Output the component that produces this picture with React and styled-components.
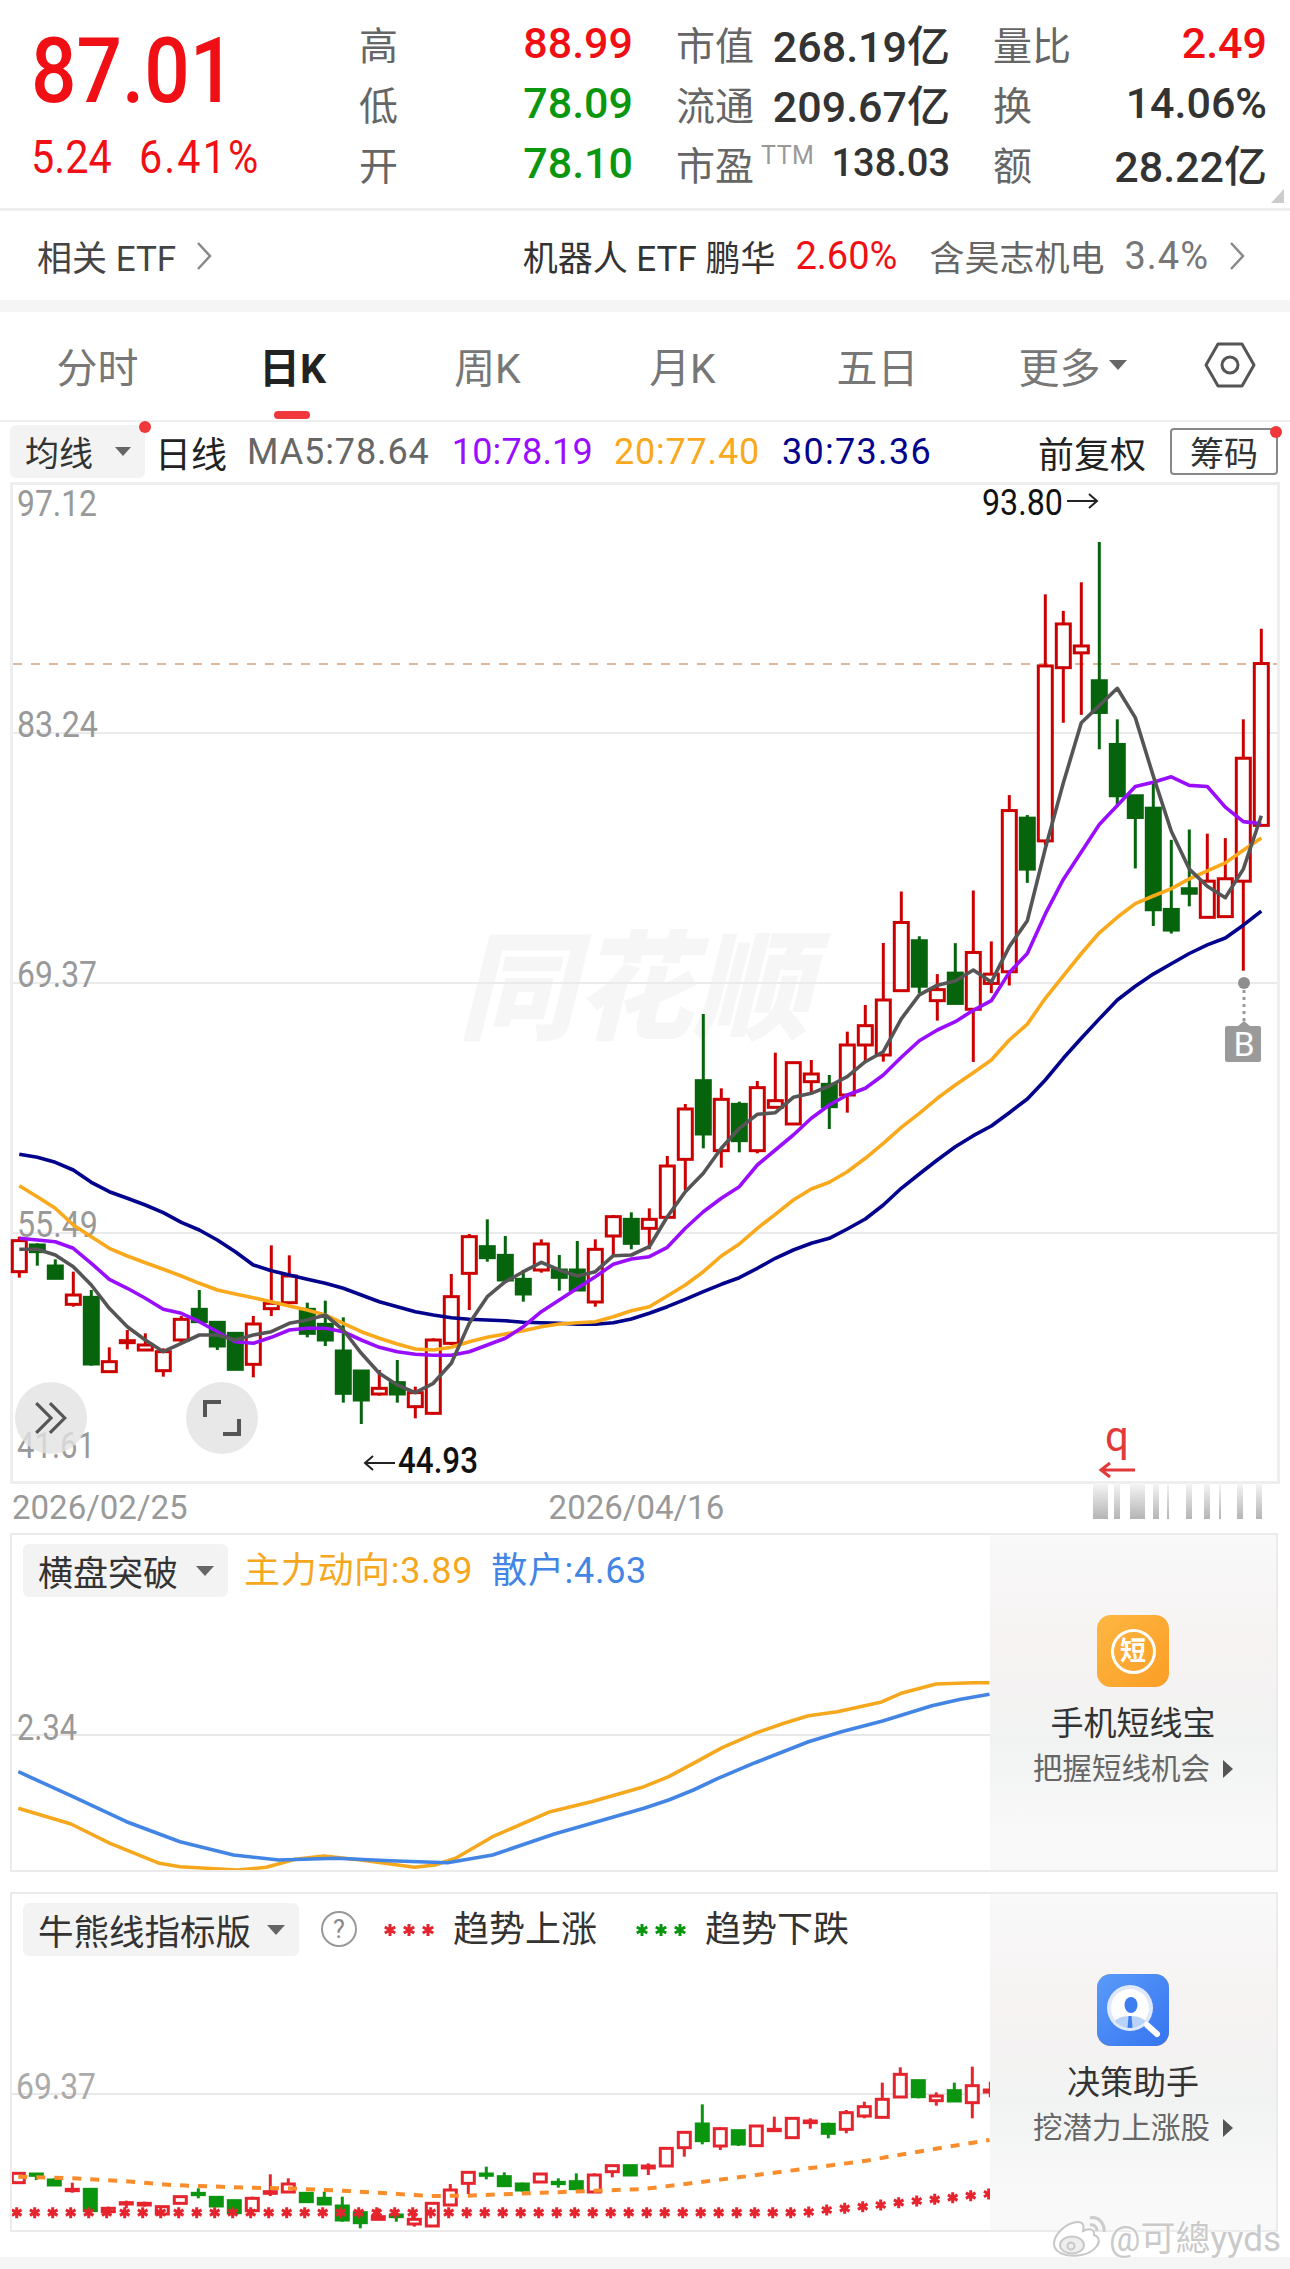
import styled, { createGlobalStyle } from 'styled-components'

const FONT = 'Roboto, "Noto Sans CJK SC", sans-serif'
const RED = '#f00f14'
const GREEN = '#0a960f'

const GlobalStyle = createGlobalStyle`
	html, body {
		margin: 0;
		padding: 0;
		background: #fff;
		font-family: ${FONT};
	}
	* {
		box-sizing: border-box;
	}
`

/* ---------- chart data, read off the picture ---------- */

const xAt = (i) => 19.3 + 18 * i
const lowerY = (v) => 1020 + v / 3
const upperY = (v) => 480 + v / 2.904
const miniY = (v) => 1890 + v / 3

// [high, bodyTop, bodyBottom, low, colour]
const candlesLower = [
	[650, 662, 755, 773, 'r'], [670, 675, 695, 737, 'g'], [718, 738, 775, 775, 'g'], [755, 825, 853, 860, 'r'],
	[810, 832, 1032, 1037, 'g'], [982, 1025, 1055, 1055, 'r'], [930, 962, 968, 988, 'r'], [940, 975, 990, 990, 'r'],
	[985, 995, 1052, 1070, 'r'], [888, 898, 960, 970, 'r'], [810, 868, 905, 905, 'g'], [905, 907, 978, 990, 'g'],
	[940, 940, 1048, 1048, 'g'], [888, 912, 1033, 1072, 'r'], [676, 850, 866, 888, 'r'], [706, 768, 848, 850, 'r'],
	[848, 868, 940, 952, 'g'], [842, 913, 960, 978, 'g'], [892, 993, 1120, 1148, 'g'], [1053, 1053, 1140, 1212, 'g'],
	[1050, 1105, 1122, 1127, 'r'], [1020, 1088, 1122, 1148, 'g'], [1100, 1118, 1160, 1195, 'r'], [955, 960, 1180, 1183, 'r'],
	[762, 830, 970, 975, 'r'], [642, 650, 760, 870, 'r'], [598, 680, 713, 725, 'g'], [648, 706, 780, 780, 'g'],
	[750, 778, 822, 845, 'g'], [658, 672, 750, 758, 'r'], [705, 750, 772, 812, 'g'], [663, 750, 810, 810, 'g'],
	[658, 688, 846, 860, 'r'], [585, 590, 648, 705, 'r'], [577, 598, 670, 688, 'g'], [565, 598, 625, 688, 'r'],
	[408, 438, 592, 592, 'r'], [252, 267, 418, 510, 'r'], [-18, 182, 342, 385, 'g'], [205, 238, 392, 443, 'r'],
	[245, 253, 362, 397, 'g'], [183, 203, 392, 400, 'r'], [98, 242, 262, 262, 'r'], [128, 128, 312, 312, 'r'],
	[120, 162, 185, 220, 'r'], [165, 193, 260, 327, 'g'], [35, 75, 225, 278, 'r'], [-45, 17, 75, 125, 'r'],
	[-231, -60, 105, 125, 'r'],
]

const candlesUpper = [
	[1195, 1285, 1483, 1483, 'r'], [1325, 1338, 1470, 1490, 'g'], [1435, 1480, 1512, 1570, 'r'], [1345, 1432, 1520, 1520, 'g'],
	[1192, 1372, 1537, 1690, 'r'], [1340, 1435, 1462, 1490, 'r'], [915, 960, 1428, 1468, 'r'], [973, 982, 1130, 1170, 'g'],
	[332, 540, 1048, 1060, 'r'], [380, 418, 545, 705, 'r'], [297, 482, 502, 682, 'r'], [180, 583, 675, 782, 'g'],
	[695, 768, 917, 950, 'g'], [915, 917, 980, 1128, 'g'], [880, 953, 1248, 1295, 'g'], [1045, 1247, 1307, 1317, 'g'],
	[1015, 1187, 1200, 1238, 'g'], [1027, 1165, 1270, 1270, 'r'], [1040, 1158, 1268, 1268, 'r'], [695, 808, 1165, 1425, 'r'],
	[432, 533, 1003, 1003, 'r'],
]

const candlesMini = [
	[848, 850, 878, 880, 'r'], [850, 852, 856, 870, 'g'], [865, 870, 885, 885, 'g'], [878, 898, 902, 908, 'r'],
	[895, 898, 962, 962, 'g'], [950, 955, 965, 965, 'r'], [932, 938, 942, 955, 'r'], [935, 940, 945, 950, 'r'],
	[948, 950, 972, 975, 'r'], [918, 920, 940, 942, 'r'], [895, 910, 914, 925, 'g'], [922, 922, 948, 948, 'g'],
	[932, 932, 968, 968, 'g'], [920, 925, 962, 965, 'r'], [853, 905, 910, 918, 'r'], [865, 882, 906, 908, 'r'],
	[908, 910, 935, 937, 'g'], [905, 925, 942, 945, 'g'], [920, 948, 990, 995, 'g'], [968, 968, 998, 1015, 'g'],
	[955, 980, 988, 990, 'r'], [965, 975, 980, 995, 'g'], [975, 988, 1002, 1010, 'r'], [938, 940, 1008, 1008, 'r'],
	[882, 900, 945, 945, 'r'], [845, 847, 880, 912, 'r'], [830, 852, 856, 868, 'g'], [847, 860, 887, 887, 'g'],
	[878, 882, 900, 905, 'g'], [850, 852, 876, 878, 'r'], [865, 877, 881, 893, 'g'], [850, 875, 896, 896, 'g'],
	[850, 855, 906, 908, 'r'], [825, 827, 845, 862, 'r'], [825, 827, 855, 855, 'g'], [820, 828, 834, 855, 'r'],
	[773, 775, 828, 828, 'r'], [727, 727, 773, 800, 'r'], [643, 702, 752, 763, 'g'], [712, 716, 768, 780, 'r'],
	[722, 722, 762, 768, 'g'], [705, 708, 767, 768, 'r'], [680, 718, 722, 724, 'r'], [685, 685, 743, 743, 'r'],
	[685, 693, 698, 716, 'r'], [698, 703, 730, 745, 'g'], [660, 668, 718, 730, 'r'], [635, 650, 678, 685, 'r'],
	[578, 628, 682, 682, 'r'], [532, 553, 621, 621, 'r'], [572, 572, 620, 625, 'g'], [607, 618, 632, 647, 'r'],
	[578, 602, 633, 633, 'g'], [530, 587, 638, 685, 'r'], [575, 600, 606, 622, 'r'],
]

const series = (lower, upper) =>
	[...lower.map(lowerY), ...upper.map(upperY)].map((y, i) => `${xAt(i)},${y.toFixed(1)}`).join(' ')

const ma5 = series(
	[688, 688, 705, 740, 795, 865, 920, 960, 995, 970, 945, 945, 960, 945, 935, 910, 900, 885, 930, 1000, 1060, 1095, 1118, 1090, 1030, 910, 830, 785, 755, 727, 750, 768, 755, 707, 705, 680, 590, 515, 460, 385, 325, 283, 278, 232, 220, 198, 170, 125, 95],
	[1565, 1495, 1467, 1455, 1423, 1458, 1355, 1280, 1070, 880, 705, 655, 605, 690, 860, 1020, 1130, 1180, 1213, 1130, 975],
)
const ma10 = series(
	[655, 660, 665, 685, 730, 778, 805, 835, 868, 880, 905, 935, 965, 970, 952, 930, 925, 925, 935, 960, 982, 995, 1003, 1006, 1006, 995, 975, 955, 920, 875, 840, 805, 770, 733, 717, 710, 682, 625, 575, 535, 500, 435, 390, 345, 295, 255, 225, 205, 165, 112, 62, 30, 5],
	[1540, 1512, 1430, 1375, 1260, 1160, 1080, 1000, 945, 890, 878, 862, 887, 890, 950, 992, 998],
)
const ma20 = series(
	[497, 530, 565, 615, 650, 685, 708, 728, 748, 768, 790, 810, 822, 833, 845, 858, 870, 885, 910, 935, 955, 972, 987, 990, 982, 965, 952, 942, 932, 920, 912, 908, 905, 890, 872, 860, 828, 795, 755, 708, 672, 625, 583, 540, 507, 487, 455, 415, 370, 322, 280, 235, 195, 158, 120, 60],
	[1580, 1505, 1440, 1375, 1315, 1270, 1230, 1208, 1187, 1158, 1135, 1112, 1075, 1040],
)
const ma30 = series(
	[403, 412, 427, 450, 487, 515, 535, 555, 578, 607, 630, 660, 695, 735, 752, 765, 778, 790, 805, 825, 845, 860, 875, 885, 893, 898, 900, 902, 907, 908, 910, 913, 913, 908, 897, 880, 860, 838, 815, 793, 773, 745, 715, 690, 670, 655, 627, 597, 555, 505, 462, 420, 380, 347, 318, 278, 237, 180, 115, 55],
	[1565, 1510, 1470, 1435, 1405, 1375, 1350, 1330, 1293, 1252],
)

const zoomPoints = (pts, originX, toY) =>
	pts.map(([x, y]) => `${(originX + x / 2.431).toFixed(1)},${toY(y).toFixed(1)}`).join(' ')

const hpY = (v) => 1520 + v / 3

const trendBlue = [
	zoomPoints([[47, 755], [180, 830], [310, 905], [440, 965], [570, 1005], [680, 1020], [820, 1015], [950, 1022], [1090, 1028], [1200, 1005], [1350, 942]], 0, hpY),
	zoomPoints([[0, 865], [60, 840], [120, 810], [180, 775], [270, 728], [400, 665], [480, 635], [580, 603], [700, 557], [770, 538], [840, 523]], 645, hpY),
].join(' ')

const trendOrange = [
	zoomPoints([[47, 865], [175, 912], [270, 970], [390, 1030], [440, 1040], [580, 1050], [650, 1042], [720, 1018], [790, 1008], [880, 1020], [1010, 1042], [1060, 1035], [1110, 1015], [1200, 950], [1340, 875], [1440, 845]], 0, hpY),
	zoomPoints([[0, 800], [60, 770], [120, 730], [190, 683], [270, 640], [340, 610], [400, 587], [470, 575], [575, 547], [625, 520], [710, 492], [800, 488], [840, 488]], 645, hpY),
].join(' ')

const bullLine = [
	zoomPoints([[47, 860], [180, 865], [300, 873], [420, 885], [600, 893], [700, 895], [850, 903], [1050, 918], [1140, 917], [1320, 908]], 0, miniY),
	zoomPoints([[0, 897], [100, 882], [230, 862], [400, 835], [540, 812], [620, 795], [750, 768], [840, 750]], 645, miniY),
].join(' ')

const starRamp = [966, 960, 955, 950, 945, 938, 933, 928, 923, 917, 912]
const starsY = Array.from({ length: 55 }, (_, i) => (i < 44 ? 968 : starRamp[i - 44]))

const fadeBars = [
	[1093, 15], [1114, 6], [1130, 15], [1153, 6], [1167, 2], [1186, 6], [1204, 6], [1219, 2], [1237, 6], [1256, 6],
]

/* ---------- drawings ---------- */

const Candles = ({ rows, toY, from = 0, up, down, width, stroke }) =>
	rows.map(([high, top, bottom, low, colour], idx) => {
		const x = xAt(from + idx)
		const y0 = toY(high)
		const y1 = toY(top)
		const y2 = toY(bottom)
		const y3 = toY(low)
		const fill = colour === 'r' ? up : down
		return (
			<g key={idx} stroke={fill} strokeWidth={stroke}>
				<line x1={x} x2={x} y1={y0} y2={y1} />
				<line x1={x} x2={x} y1={y2} y2={y3} />
				<rect
					x={x - width / 2}
					y={y1}
					width={width}
					height={Math.max(y2 - y1, 1)}
					fill={colour === 'r' ? '#fff' : fill}
				/>
			</g>
		)
	})

const Line = ({ points, color, width = 3.6, dash }) => (
	<polyline
		points={points}
		fill="none"
		stroke={color}
		strokeWidth={width}
		strokeLinejoin="round"
		strokeDasharray={dash}
	/>
)

const AxisText = ({ x, y, w, children, fill = '#999' }) => (
	<text x={x} y={y} fontSize="37" fill={fill} fontFamily={FONT} textLength={w} lengthAdjust="spacingAndGlyphs">
		{children}
	</text>
)

const Star = ({ x, y, r = 5.5, color }) => (
	<path
		d={`M${x} ${y - r}V${y + r}M${x - r * 0.87} ${y - r / 2}L${x + r * 0.87} ${y + r / 2}M${x - r * 0.87} ${y + r / 2}L${x + r * 0.87} ${y - r / 2}`}
		stroke={color}
		strokeWidth="3"
		fill="none"
	/>
)

const Stars = ({ color }) => (
	<svg width="52" height="14" viewBox="0 0 52 14">
		<Star x={7} y={7} r={6} color={color} />
		<Star x={26} y={7} r={6} color={color} />
		<Star x={45} y={7} r={6} color={color} />
	</svg>
)

const MainChart = () => (
	<ChartSvg viewBox="13 485 1264 996">
		<text x="458" y="1030" fontSize="118" fontWeight="900" fontStyle="italic" fill="#f6f6f6" fontFamily={FONT} textLength="352" lengthAdjust="spacingAndGlyphs">
			同花顺
		</text>
		<g stroke="#ebebeb" strokeWidth="2">
			<line x1="13" x2="1277" y1="733" y2="733" />
			<line x1="13" x2="1277" y1="983" y2="983" />
			<line x1="13" x2="1277" y1="1233" y2="1233" />
		</g>
		<line x1="13" x2="1277" y1="664" y2="664" stroke="#e0b89a" strokeWidth="2" strokeDasharray="9 9" />

		<AxisText x={17} y={516} w={80}>97.12</AxisText>
		<AxisText x={17} y={737} w={81}>83.24</AxisText>
		<AxisText x={17} y={987} w={80}>69.37</AxisText>
		<AxisText x={17} y={1237} w={81}>55.49</AxisText>
		<AxisText x={17} y={1458} w={78}>41.61</AxisText>

		<Candles rows={candlesLower} toY={lowerY} up="#cc0000" down="#05640c" width={14} stroke={3} />
		<Candles rows={candlesUpper} toY={upperY} from={49} up="#cc0000" down="#05640c" width={14} stroke={3} />

		<Line points={ma30} color="#02028c" />
		<Line points={ma20} color="#f9a91b" />
		<Line points={ma10} color="#9a0eff" />
		<Line points={ma5} color="#555555" />

		<AxisText x={982} y={515} w={81} fill="#111">93.80</AxisText>
		<path d="M1067 501H1097M1089 494L1097 501L1089 508" stroke="#222" strokeWidth="2" fill="none" />
		<path d="M365 1463H395M373 1456L365 1463L373 1470" stroke="#222" strokeWidth="2" fill="none" />
		<text x="398" y="1473" fontSize="37" fontWeight="500" fill="#111" fontFamily={FONT} textLength="80" lengthAdjust="spacingAndGlyphs">
			44.93
		</text>

		<circle cx="1244" cy="983" r="6" fill="#8e8e8e" />
		<line x1="1244" x2="1244" y1="990" y2="1026" stroke="#9a9a9a" strokeWidth="3" strokeDasharray="3 4" />
		<path d="M1244 1021L1250 1026H1259a2 2 0 0 1 2 2V1060a2 2 0 0 1 -2 2H1227a2 2 0 0 1 -2 -2V1028a2 2 0 0 1 2 -2H1238Z" fill="#9a9a9a" />
		<text x="1244" y="1056" fontSize="34" fill="#fff" textAnchor="middle" fontFamily={FONT}>B</text>

		<text x="1105" y="1451" fontSize="42" fill="#e23a3a" fontFamily={FONT}>q</text>
		<path d="M1101 1470H1135M1110 1463L1101 1470L1110 1477" stroke="#e23a3a" strokeWidth="3" fill="none" />
	</ChartSvg>
)

const TrendChart = () => (
	<PanelSvg viewBox="13 1600 978 270">
		<line x1="13" x2="991" y1="1735" y2="1735" stroke="#e8e8e8" strokeWidth="2" />
		<AxisText x={18} y={1740} w={60}>2.34</AxisText>
		<Line points={trendOrange} color="#f5a81e" />
		<Line points={trendBlue} color="#4285e4" />
	</PanelSvg>
)

const BullChart = () => (
	<PanelSvg viewBox="13 1960 978 270">
		<line x1="13" x2="991" y1="2094" y2="2094" stroke="#e8e8e8" strokeWidth="2" />
		<AxisText x={17} y={2099} w={80} fill="#aaa">69.37</AxisText>
		<Candles rows={candlesMini} toY={miniY} up="#e5242e" down="#0a950f" width={12} stroke={3} />
		<Line points={bullLine} color="#f98c2b" width={4} dash="9 9" />
		{starsY.map((v, i) => (
			<Star key={i} x={xAt(i) - 1.6} y={miniY(v)} color="#e5242e" />
		))}
	</PanelSvg>
)

const HexIcon = () => (
	<svg width="54" height="48" viewBox="0 0 54 48" fill="none" stroke="#555" strokeWidth="3">
		<path d="M15 3H39L51 24L39 45H15L3 24Z" strokeLinejoin="round" />
		<circle cx="27" cy="24" r="8" />
	</svg>
)

const Chevron = ({ color = '#888' }) => (
	<svg width="16" height="30" viewBox="0 0 16 30" fill="none" stroke={color} strokeWidth="2.5">
		<path d="M2 2L14 15L2 28" />
	</svg>
)

const BarsIcon = () => (
	<svg width="1290" height="36" viewBox="0 0 1290 36">
		<defs>
			<linearGradient id="fade" x1="0" y1="0" x2="0" y2="1">
				<stop offset="0" stopColor="#f6f6f6" />
				<stop offset="1" stopColor="#b4b4b4" />
			</linearGradient>
		</defs>
		{fadeBars.map(([x, w]) => (
			<rect key={x} x={x} y="0" width={w} height="36" fill="url(#fade)" />
		))}
	</svg>
)

const AdvisorIcon = () => (
	<svg width="72" height="72" viewBox="0 0 72 72">
		<defs>
			<linearGradient id="advisor" x1="0" y1="0" x2="1" y2="1">
				<stop offset="0" stopColor="#5a9bfa" />
				<stop offset="1" stopColor="#3574f0" />
			</linearGradient>
			<clipPath id="lens">
				<circle cx="33" cy="34" r="20" />
			</clipPath>
		</defs>
		<rect width="72" height="72" rx="14" fill="url(#advisor)" />
		<circle cx="33" cy="34" r="23" fill="#dfe9fb" />
		<circle cx="33" cy="34" r="19" fill="#fff" />
		<g clipPath="url(#lens)">
			<path d="M13 56C15 45 24 42 33 42C42 42 51 45 53 56Z" fill="#b9d2f7" />
			<path d="M31.5 42H34.5L35.5 54H30.5Z" fill="#3d7ef0" />
		</g>
		<ellipse cx="34" cy="31" rx="6.5" ry="8" fill="#3d7ef0" />
		<path d="M50 51L60 60" stroke="#fff" strokeWidth="6" strokeLinecap="round" />
	</svg>
)

const WeiboLogo = () => (
	<svg width="58" height="46" viewBox="0 0 58 46" fill="none" stroke="#c8c8c8" strokeWidth="2">
		<path d="M4 31C4 20 18 9 28 9C34 9 34 14 33 18C39 15 45 16 44 22C50 24 50 30 46 34C40 42 26 44 16 42C8 40 4 36 4 31Z" fill="#fff" />
		<ellipse cx="22" cy="32" rx="12" ry="8.5" fill="#eee" />
		<circle cx="21" cy="33" r="3.5" />
		<path d="M40 12C44 11 47 14 47 18M40 5C48 3 55 10 54 19" stroke="#ccc" strokeWidth="3" />
	</svg>
)

/* ---------- page ---------- */

const Page = styled.div`
	position: relative;
	width: 1290px;
	height: 2269px;
	overflow: hidden;
	background: #fff;
	color: #333;
	display: flex;
	flex-direction: column;
`

const Quote = styled.section`
	position: relative;
	height: 208px;
	display: flex;
	flex: none;
`

const PriceBlock = styled.div`
	width: 360px;
	padding: 22px 0 0 31px;
	flex: none;
`

const Price = styled.div`
	font-size: 90px;
	line-height: 100px;
	font-weight: 500;
	color: ${RED};
	transform: scaleX(0.89);
	transform-origin: left center;
`

const Change = styled.div`
	display: flex;
	gap: 31px;
	margin-top: 10px;
	font-size: 47px;
	line-height: 50px;
	color: ${RED};
	transform: scaleX(0.88);
	transform-origin: left center;
`

const ChangePercent = styled.span`
	letter-spacing: 2.4px;
`

const Stats = styled.div`
	display: grid;
	grid-template-columns: repeat(3, 274px);
	grid-auto-rows: 60px;
	column-gap: 43px;
	padding-top: 13px;
	margin-left: -1px;
`

const Stat = styled.div`
	display: flex;
	align-items: center;
	justify-content: space-between;
`

const StatLabel = styled.span`
	font-size: 39px;
	color: #666;
	white-space: nowrap;
	display: flex;
	align-items: flex-start;

	& small {
		font-size: 25px;
		color: #999;
		margin: 6px 0 0 7px;
		letter-spacing: 0.5px;
	}
`

const StatValue = styled.span`
	font-size: ${(p) => p.$size || 43}px;
	font-weight: 500;
	white-space: nowrap;
	color: ${(p) => p.$color || '#333'};
`

const Fold = styled.i`
	position: absolute;
	right: 6px;
	bottom: 5px;
	width: 0;
	height: 0;
	border-left: 13px solid transparent;
	border-bottom: 14px solid #ccc;
`

const EtfRow = styled.div`
	height: 92px;
	flex: none;
	border-top: 3px solid #eee;
	padding: 0 45px 0 37px;
	display: flex;
	align-items: center;
	justify-content: space-between;
	font-size: 35px;
`

const EtfGroup = styled.div`
	display: flex;
	align-items: center;
	gap: ${(p) => p.$gap || 20}px;
	color: ${(p) => p.$color || '#333'};
	white-space: nowrap;
`

const EtfPercent = styled.span`
	color: ${(p) => p.$color || RED};
	margin-left: ${(p) => p.$gap || 0}px;
`

const EtfNumber = styled(EtfPercent)`
	font-size: 38px;
	letter-spacing: ${(p) => p.$spacing || 0}px;
`

const Band = styled.div`
	height: 12px;
	flex: none;
	background: #f5f5f5;
`

const Tabs = styled.nav`
	height: 108px;
	flex: none;
	display: grid;
	grid-template-columns: repeat(6, 195px) 1fr;
	align-items: stretch;
	font-size: 41px;
	color: #777;
`

const Tab = styled.div`
	position: relative;
	display: flex;
	align-items: center;
	justify-content: center;
	padding-bottom: 2px;
	gap: 8px;
	font-weight: ${(p) => (p.$active ? 700 : 400)};
	color: ${(p) => (p.$active ? '#222' : '#777')};

	${(p) =>
		p.$active &&
		`&::after {
			content: '';
			position: absolute;
			left: 79px;
			bottom: 1px;
			width: 36px;
			height: 8px;
			border-radius: 4px;
			background: #f0383c;
		}`}
`

const Caret = styled.i`
	flex: none;
	width: 0;
	height: 0;
	border-left: ${(p) => p.$size || 9}px solid transparent;
	border-right: ${(p) => p.$size || 9}px solid transparent;
	border-top: ${(p) => (p.$size || 9) * 1.2}px solid ${(p) => p.$color || '#666'};
`

const MaRow = styled.div`
	height: 62px;
	flex: none;
	border-top: 2px solid #eee;
	padding: 3px 12px 4px 10px;
	display: flex;
	align-items: center;
	font-size: 36px;
	white-space: nowrap;
`

const Picker = styled.div`
	position: relative;
	flex: none;
	display: flex;
	align-items: center;
	justify-content: space-between;
	height: 53px;
	width: ${(p) => p.$width}px;
	padding: 0 ${(p) => p.$right || 14}px 0 15px;
	border-radius: 6px;
	background: #f3f3f3;
	font-size: ${(p) => p.$size || 34}px;
	color: #333;
`

const RedDot = styled.i`
	position: absolute;
	top: -4px;
	right: -6px;
	width: 12px;
	height: 12px;
	border-radius: 50%;
	background: #f0383c;
`

const MaLabel = styled.span`
	color: ${(p) => p.$color};
	margin-left: ${(p) => p.$gap}px;
	letter-spacing: ${(p) => p.$spacing || 0}px;
`

const MaRight = styled.div`
	margin-left: auto;
	display: flex;
	align-items: center;
	gap: 24px;
	color: #222;
	font-size: 36px;
`

const ChipsButton = styled.div`
	position: relative;
	width: 108px;
	height: 47px;
	display: flex;
	align-items: center;
	justify-content: center;
	border: 2px solid #888;
	border-radius: 4px;
	font-size: 34px;
	color: #333;
`

const ChartBox = styled.div`
	position: relative;
	flex: none;
	height: 1002px;
	margin: 0 10px;
	border: 3px solid #eee;
`

const ChartSvg = styled.svg`
	display: block;
	width: 100%;
	height: 100%;
	overflow: visible;
`

const RoundButton = styled.div`
	position: absolute;
	top: ${1418 - 485 - 36}px;
	left: ${(p) => p.$left}px;
	width: 72px;
	height: 72px;
	border-radius: 50%;
	background: rgba(226, 226, 226, 0.8);
	display: flex;
	align-items: center;
	justify-content: center;
	color: #555;
`

const DateRow = styled.div`
	position: relative;
	flex: none;
	height: 49px;
	padding: 0 12px 3px;
	display: flex;
	align-items: center;
	font-size: 33px;
	color: #999;

	& > span + span {
		margin-left: 361px;
	}
`

const FadeBars = styled.div`
	position: absolute;
	left: 0;
	top: -1px;
	line-height: 0;
`

const IndicatorPanel = styled.section`
	flex: none;
	height: ${(p) => p.$height}px;
	margin: ${(p) => p.$top || 0}px 12px 0 10px;
	border: 2px solid #ebebeb;
	display: grid;
	grid-template-columns: 979px 1fr;
`

const PanelMain = styled.div`
	position: relative;
	min-width: 0;
	display: flex;
	flex-direction: column;
`

const PanelBar = styled.div`
	flex: none;
	height: ${(p) => p.$height}px;
	padding: 9px 0 0 11px;
	display: flex;
	align-items: flex-start;
	font-size: 36px;
	white-space: nowrap;
`

const BarText = styled.span`
	line-height: 55px;
	color: ${(p) => p.$color || '#333'};
	margin-left: ${(p) => p.$gap || 0}px;
	letter-spacing: ${(p) => p.$spacing || 0}px;
`

const Help = styled.span`
	flex: none;
	width: 36px;
	height: 36px;
	margin: 8px 0 0 22px;
	border: 2px solid #999;
	border-radius: 50%;
	display: flex;
	align-items: center;
	justify-content: center;
	font-size: 25px;
	color: #888;
`

const StarGroup = styled.span`
	line-height: 0;
	margin: 20px 18px 0 ${(p) => p.$gap}px;
`

const PanelSvg = styled.svg`
	display: block;
	width: 978px;
	height: 270px;
`

const Promo = styled.aside`
	display: flex;
	flex-direction: column;
	align-items: center;
	padding-top: ${(p) => p.$top}px;
	margin-left: -1px;
	background: linear-gradient(180deg, #f9f9f9 0%, #f6f2f2 35%, #f1f3f2 62%, #f9f9f9 90%);
`

const PromoIcon = styled.div`
	width: 72px;
	height: 72px;
	border-radius: 14px;
	background: linear-gradient(135deg, #fdb742, #fb9d25);
	display: flex;
	align-items: center;
	justify-content: center;
	line-height: 0;
`

const PromoBadge = styled.span`
	width: 45px;
	height: 45px;
	border: 3px solid #fff;
	border-radius: 50%;
	display: flex;
	align-items: center;
	justify-content: center;
	color: #fff;
	font-size: 26px;
	line-height: 1;
	font-weight: 700;
`

const PromoTitle = styled.div`
	margin-top: 15px;
	font-size: 33px;
	line-height: 44px;
	color: #333;
	white-space: nowrap;
`

const PromoLink = styled.div`
	display: flex;
	align-items: center;
	gap: 13px;
	margin-top: 2px;
	font-size: 29.5px;
	line-height: 42px;
	color: #666;
	white-space: nowrap;
`

const PromoArrow = styled.i`
	width: 0;
	height: 0;
	border-top: 9px solid transparent;
	border-bottom: 9px solid transparent;
	border-left: 10px solid #555;
`

const BottomBand = styled(Band)`
	margin-top: auto;
`

const Watermark = styled.div`
	position: absolute;
	left: 1050px;
	top: 2210px;
	display: flex;
	align-items: center;
	gap: 1px;
	font-size: 35px;
	color: #cacaca;
	white-space: nowrap;
	text-shadow: 0 0 3px #fff, 0 0 2px #fff;
`

const App = () => {
	return (
		<Page>
			<GlobalStyle />
			<Quote>
				<PriceBlock>
					<Price>87.01</Price>
					<Change>
						<span>5.24</span>
						<ChangePercent>6.41%</ChangePercent>
					</Change>
				</PriceBlock>
				<Stats>
					<Stat><StatLabel>高</StatLabel><StatValue $color={RED}>88.99</StatValue></Stat>
					<Stat><StatLabel>市值</StatLabel><StatValue>268.19亿</StatValue></Stat>
					<Stat><StatLabel>量比</StatLabel><StatValue $color={RED}>2.49</StatValue></Stat>
					<Stat><StatLabel>低</StatLabel><StatValue $color={GREEN}>78.09</StatValue></Stat>
					<Stat><StatLabel>流通</StatLabel><StatValue>209.67亿</StatValue></Stat>
					<Stat><StatLabel>换</StatLabel><StatValue>14.06%</StatValue></Stat>
					<Stat><StatLabel>开</StatLabel><StatValue $color={GREEN}>78.10</StatValue></Stat>
					<Stat><StatLabel>市盈<small>TTM</small></StatLabel><StatValue $size={38}>138.03</StatValue></Stat>
					<Stat><StatLabel>额</StatLabel><StatValue>28.22亿</StatValue></Stat>
				</Stats>
				<Fold />
			</Quote>

			<EtfRow>
				<EtfGroup $color="#444">相关 ETF <Chevron /></EtfGroup>
				<EtfGroup>
					<span>机器人 ETF 鹏华</span>
					<EtfNumber>2.60%</EtfNumber>
					<EtfPercent $color="#666" $gap={12}>含昊志机电</EtfPercent>
					<EtfNumber $color="#777" $spacing={1}>3.4%</EtfNumber>
					<Chevron />
				</EtfGroup>
			</EtfRow>
			<Band />

			<Tabs>
				<Tab>分时</Tab>
				<Tab $active>日K</Tab>
				<Tab>周K</Tab>
				<Tab>月K</Tab>
				<Tab>五日</Tab>
				<Tab>更多<Caret /></Tab>
				<Tab><HexIcon /></Tab>
			</Tabs>

			<MaRow>
				<Picker $width={135}>
					均线
					<Caret $size={8} />
					<RedDot />
				</Picker>
				<MaLabel $color="#222" $gap={10}>日线</MaLabel>
				<MaLabel $color="#666" $gap={20} $spacing={0.9}>MA5:78.64</MaLabel>
				<MaLabel $color="#9a0eff" $gap={22} $spacing={0.2}>10:78.19</MaLabel>
				<MaLabel $color="#f9a91b" $gap={21} $spacing={0.8}>20:77.40</MaLabel>
				<MaLabel $color="#02028c" $gap={22} $spacing={1.3}>30:73.36</MaLabel>
				<MaRight>
					前复权
					<ChipsButton>
						筹码
						<RedDot />
					</ChipsButton>
				</MaRight>
			</MaRow>

			<ChartBox>
				<MainChart />
				<RoundButton $left={2}>
					<svg width="38" height="38" viewBox="0 0 36 36" fill="none" stroke="currentColor" strokeWidth="3">
						<path d="M4 4L18 18L4 32M17 4L31 18L17 32" />
					</svg>
				</RoundButton>
				<RoundButton $left={173}>
					<svg width="38" height="38" viewBox="0 0 38 38" fill="none" stroke="currentColor" strokeWidth="4">
						<path d="M2 18V3H18M36 20V35H20" />
					</svg>
				</RoundButton>
			</ChartBox>
			<DateRow>
				<span>2026/02/25</span>
				<span>2026/04/16</span>
				<FadeBars><BarsIcon /></FadeBars>
			</DateRow>

			<IndicatorPanel $height={339}>
				<PanelMain>
					<PanelBar $height={65}>
						<Picker $width={205} $size={35}>
							横盘突破
							<Caret $size={9} />
						</Picker>
						<BarText $color="#f5a81e" $gap={16} $spacing={0.7}>主力动向:3.89</BarText>
						<BarText $color="#4285e4" $gap={18} $spacing={0.7}>散户:4.63</BarText>
					</PanelBar>
					<TrendChart />
				</PanelMain>
				<Promo $top={80}>
					<PromoIcon><PromoBadge>短</PromoBadge></PromoIcon>
					<PromoTitle>手机短线宝</PromoTitle>
					<PromoLink>把握短线机会<PromoArrow /></PromoLink>
				</Promo>
			</IndicatorPanel>

			<IndicatorPanel $height={340} $top={20}>
				<PanelMain>
					<PanelBar $height={66}>
						<Picker $width={276} $size={35.5}>
							牛熊线指标版
							<Caret $size={9} />
						</Picker>
						<Help>?</Help>
						<StarGroup $gap={26}><Stars color="#e5242e" /></StarGroup>
						<BarText>趋势上涨</BarText>
						<StarGroup $gap={38}><Stars color="#0a950f" /></StarGroup>
						<BarText>趋势下跌</BarText>
					</PanelBar>
					<BullChart />
				</PanelMain>
				<Promo $top={80}>
					<PromoIcon as="div"><AdvisorIcon /></PromoIcon>
					<PromoTitle>决策助手</PromoTitle>
					<PromoLink>挖潜力上涨股<PromoArrow /></PromoLink>
				</Promo>
			</IndicatorPanel>
			<BottomBand />

			<Watermark>
				<WeiboLogo />
				@可總yyds
			</Watermark>
		</Page>
	)
}

export default App
